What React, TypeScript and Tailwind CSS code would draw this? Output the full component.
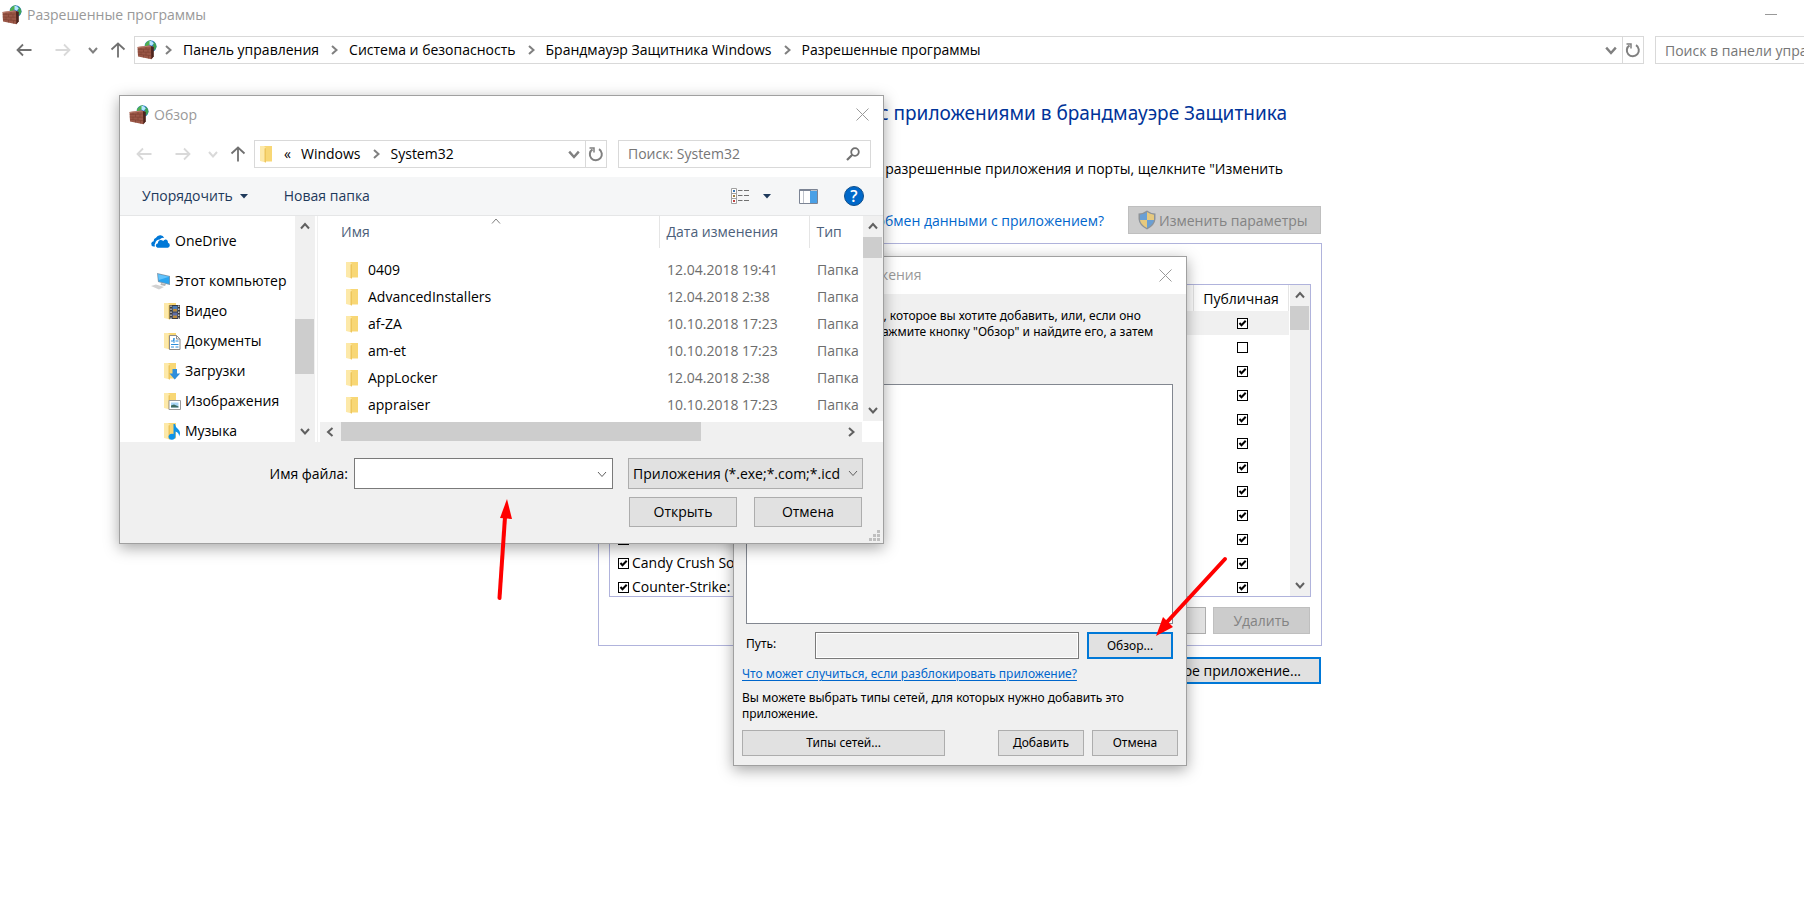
import type { ReactNode } from 'react'

const PUBLIC_ROWS = [
  { name: '', on: true },
  { name: '', on: false },
  { name: '', on: true },
  { name: '', on: true },
  { name: '', on: true },
  { name: '', on: true },
  { name: '', on: true },
  { name: '', on: true },
  { name: '', on: true },
  { name: 'Bubble Witch 3 Saga', on: true },
  { name: 'Candy Crush Soda Saga', on: true },
  { name: 'Counter-Strike:', on: true },
]

const FILES = [
  { name: '0409', date: '12.04.2018 19:41' },
  { name: 'AdvancedInstallers', date: '12.04.2018 2:38' },
  { name: 'af-ZA', date: '10.10.2018 17:23' },
  { name: 'am-et', date: '10.10.2018 17:23' },
  { name: 'AppLocker', date: '12.04.2018 2:38' },
  { name: 'appraiser', date: '10.10.2018 17:23' },
]

const CRUMBS = ['Панель управления', 'Система и безопасность', 'Брандмауэр Защитника Windows', 'Разрешенные программы']

function FirewallIcon() {
  return (
    <svg width="20" height="20" viewBox="0 0 20 20" className="shrink-0">
      <circle cx="13.5" cy="6.2" r="6" fill="#2f7fd0" />
      <path d="M8 4.500Q10 .5 14 .3L13.500 3 11.500 5.500 8 7Z" fill="#4fb04f" />
      <path d="M16.500 1.300Q19.300 3.500 19.500 7L17.500 10.500 16 6.500Z" fill="#3fa353" />
      <path d="M12.500 .8Q15.500 .6 16.800 3.500L14.500 5.800 12.500 4.500Z" fill="#b5e6ff" />
      <path d="M.5 7 12.500 5.500 16 6.500V17L14.500 19.300 1 16.500Z" fill="#9a5747" />
      <path d="M14 6.300 16.800 7V16.500L14.300 19.300Z" fill="#4d241c" />
      <path d="M.5 7 12.500 5.500 14 6.300 1 8Z" fill="#bd8172" />
      <path d="M.8 9.500 13.700 9M.8 12 13.700 12.300M1 14.300 14 15.700" stroke="#7c3f31" strokeWidth=".6" fill="none" />
      <path d="M4 7.700V9.400M9 7.200V9.200M6.500 9.300V12M11 9.200V12.200M4 12.200V14.700M9 12.300V15.200M6.500 15V17.500M11.500 15.500V18.500" stroke="#7c3f31" strokeWidth=".6" />
    </svg>
  )
}

function FolderIcon({ children }: { children?: ReactNode }) {
  return (
    <svg width="18" height="18" viewBox="0 0 18 18" className="shrink-0">
      <path d="M5 1H13V16.500H5Z" fill="#f8d775" />
      <path d="M1 1H5L7 3V17.500L1 16Z" fill="#fde9a9" />
      <path d="M5.500 3.500 7 3V17.500L5.500 17Z" fill="#eec65c" />
      {children}
    </svg>
  )
}

function Chevron({ dir, size = 10, color = '#606060', width = 2 }: { dir: 'up' | 'down' | 'left' | 'right'; size?: number; color?: string; width?: number }) {
  const d = {
    up: 'M1 7.500 5 3 9 7.500',
    down: 'M1 3 5 7.500 9 3',
    left: 'M7.500 1 3 5 7.500 9',
    right: 'M3 1 7.500 5 3 9',
  }[dir]
  return (
    <svg width={size} height={size} viewBox="0 0 10 10" fill="none" stroke={color} strokeWidth={width} className="shrink-0">
      <path d={d} />
    </svg>
  )
}

function CloseIcon() {
  return (
    <svg width="13" height="13" viewBox="0 0 13 13" stroke="#999" className="shrink-0">
      <path d="M.5 .5 12.500 12.500M12.500 .5 .5 12.500" />
    </svg>
  )
}

function RefreshIcon() {
  return (
    <svg width="16" height="16" viewBox="0 0 16 16" fill="none" stroke="#808080" strokeWidth="2">
      <path d="M11 3.200A6 6 0 1 1 4.500 3.300" />
      <path d="M1.500 2H6V6.500" strokeWidth="1.500" />
    </svg>
  )
}

function Arrow({ dir, color }: { dir: 'left' | 'right' | 'up'; color: string }) {
  const d = {
    left: 'M15.500 8H1.500M7 2.500 1.500 8 7 13.500',
    right: 'M.5 8H14.500M9 2.500 14.500 8 9 13.500',
    up: 'M8 15.500V1.500M1.500 7.500 8 1.500 14.500 7.500',
  }[dir]
  return (
    <svg width="16" height="16" viewBox="0 0 16 16" fill="none" stroke={color} strokeWidth="1.800">
      <path d={d} />
    </svg>
  )
}

function NavButtons({ active }: { active: boolean }) {
  return (
    <div className="flex shrink-0 items-center">
      <button aria-label="Назад" className="w-4"><Arrow dir="left" color={active ? '#707070' : '#d9d9d9'} /></button>
      <button aria-label="Вперед" className="ml-[23px] w-4"><Arrow dir="right" color="#d9d9d9" /></button>
      <button aria-label="Последние расположения" className="ml-[14px] w-4 px-[3px]"><Chevron dir="down" color={active ? '#808080' : '#d9d9d9'} /></button>
      <button aria-label="Вверх" className="ml-[9px] w-4"><Arrow dir="up" color="#707070" /></button>
    </div>
  )
}

function Check({ checked, label }: { checked: boolean; label: string }) {
  return (
    <span className="relative block size-[11px]">
      <input type="checkbox" defaultChecked={checked} aria-label={label} className="peer block size-[11px] appearance-none border border-black bg-white" />
      <svg viewBox="0 0 11 11" className="pointer-events-none absolute inset-0 hidden size-[11px] peer-checked:block" fill="none" stroke="#000" strokeWidth="2">
        <path d="M2.500 5 4.500 7.300 8.700 2.800" />
      </svg>
    </span>
  )
}

function VScroll({ before, thumb, className = '' }: { before: string; thumb: string; className?: string }) {
  return (
    <div className={`flex w-5 shrink-0 flex-col items-center bg-[#f0f0f0] ${className}`}>
      <button aria-label="Прокрутить вверх" className="flex h-[21px] w-full items-center justify-center pr-px pb-px"><Chevron dir="up" /></button>
      <div className={`w-full flex-1 ${before}`}>
        <div className={`w-[19px] bg-[#cdcdcd] ${thumb}`} />
      </div>
      <button aria-label="Прокрутить вниз" className="flex h-[21px] w-full items-center justify-center pr-px pb-[2px]"><Chevron dir="down" /></button>
    </div>
  )
}

function DialogButton({ children, className = '' }: { children: ReactNode; className?: string }) {
  return <button className={`border border-[#adadad] bg-[#e1e1e1] ${className}`}>{children}</button>
}

function AllowedPrograms() {
  return (
    <main className="ml-[598px] w-[724px]">
      <h1 className="pt-[29px] pr-[35px] text-right font-['Noto_Sans',sans-serif] text-[19px] leading-[26px] whitespace-nowrap text-[#003399]">с приложениями в брандмауэре Защитника</h1>
      <p className="mt-[33px] pr-[39px] text-right leading-5 whitespace-nowrap">разрешенные приложения и порты, щелкните "Изменить</p>
      <div className="mt-[27px] flex items-center justify-end pr-px">
        <a href="#risk" className="mr-6 pt-[2px] leading-5 text-[#0066cc]">обмен данными с приложением?</a>
        <button className="flex h-7 w-[193px] items-center gap-[2px] border border-[#bfbfbf] bg-[#cccccc] pl-2 text-[#838383]">
          <svg width="20" height="20" viewBox="0 0 20 20" className="shrink-0">
            <path d="M10 .5Q14 3.500 18.500 3.500V9Q18 15.500 10 19.500Q2 15.500 1.500 9V3.500Q6 3.500 10 .5Z" fill="#8d9399" />
            <path d="M10 2Q7 4.300 3 4.700V10H10Z" fill="#6a9fd4" />
            <path d="M10 2Q13 4.300 17 4.700V10H10Z" fill="#e6c97e" />
            <path d="M3 10H10V18Q3.500 14.500 3 10Z" fill="#e6c97e" />
            <path d="M17 10H10V18Q16.500 14.500 17 10Z" fill="#6a9fd4" />
          </svg>
          Изменить параметры
        </button>
      </div>

      <section className="mt-[9px] border border-[#b0b3dc] px-[10px] pt-10 pb-[11px]">
        <div className="flex h-[313px] overflow-hidden border border-[#b0b3dc]">
          <div className="flex-1 overflow-hidden">
            <table className="w-full table-fixed border-collapse">
              <thead>
                <tr className="h-[26px]">
                  <th className="border-r border-[#e5e5e5]" />
                  <th className="w-[95px] border-r border-[#e5e5e5] font-normal">Публичная</th>
                </tr>
              </thead>
              <tbody>
                {PUBLIC_ROWS.map((row, i) => (
                  <tr key={i} className="h-6 first:bg-[#f0f0f0]">
                    <td className="p-0 pl-2">
                      <div className="flex items-center gap-[3px] leading-5 whitespace-nowrap">
                        <Check checked label={`${row.name || 'Программа'}: разрешено`} />
                        {row.name}
                      </div>
                    </td>
                    <td className="p-0 pl-[43px]">
                      <Check checked={row.on} label={`${row.name || 'Программа'}: публичная`} />
                    </td>
                  </tr>
                ))}
              </tbody>
            </table>
          </div>
          <VScroll before="" thumb="h-6" className="ml-px" />
        </div>
        <div className="mt-[10px] flex justify-end gap-[7px] pr-px">
          <button aria-label="Сведения" className="h-[27px] w-[97px] border border-[#adadad] bg-[#e1e1e1]" />
          <button className="h-[27px] w-[97px] border border-[#bfbfbf] bg-[#cccccc] text-[#838383]">Удалить</button>
        </div>
      </section>

      <div className="mt-[11px] flex justify-end pr-px">
        <button className="h-[27px] w-[230px] border-2 border-[#0078d7] bg-[#e1e1e1] pr-[18px] text-right whitespace-nowrap">другое приложение...</button>
      </div>
    </main>
  )
}

function AddDialog() {
  return (
    <section role="dialog" aria-label="Добавление приложения" className="absolute top-[256px] left-[733px] w-[454px] border border-[#a0a0a0] bg-[#f0f0f0] font-['Noto_Sans',sans-serif] text-[12px] leading-4 shadow-[0_4px_14px_rgba(0,0,0,0.35)]">
      <header className="flex h-[37px] items-center justify-between bg-white pr-[14px] pb-px pl-[14px] font-['Open_Sans',sans-serif] text-[14px] text-[#999]">
        Добавление приложения
        <button aria-label="Закрыть"><CloseIcon /></button>
      </header>
      <p className="h-[90px] pt-[14px] pl-4 whitespace-nowrap">
        Выберите приложение, которое вы хотите добавить, или, если оно<br />
        отсутствует в списке, нажмите кнопку "Обзор" и найдите его, а затем<br />
        нажмите кнопку "ОК".
      </p>
      <div className="mr-[13px] ml-3 h-60 border border-[#828790] bg-white" />
      <div className="flex items-center pt-2 pr-[13px] pl-3">
        <label htmlFor="path" className="w-[69px] pb-1">Путь:</label>
        <input id="path" readOnly className="h-[27px] min-w-0 flex-1 border border-[#7a7a7a] bg-[#f0f0f0] shadow-[inset_0_0_0_1px_white]" />
        <button className="ml-2 h-[27px] w-[86px] border-2 border-[#0078d7] bg-[#e1e1e1]">Обзор...</button>
      </div>
      <div className="px-2 pt-[7px] pb-[9px]">
        <a href="#unblock" className="block text-[#0066cc] underline underline-offset-2">Что может случиться, если разблокировать приложение?</a>
        <p className="mt-2">Вы можете выбрать типы сетей, для которых нужно добавить это приложение.</p>
        <div className="mt-2 flex">
          <DialogButton className="h-[26px] w-[203px]">Типы сетей...</DialogButton>
          <DialogButton className="ml-auto h-[26px] w-[86px]">Добавить</DialogButton>
          <DialogButton className="ml-2 h-[26px] w-[86px]">Отмена</DialogButton>
        </div>
      </div>
    </section>
  )
}

function SideItem({ icon, label }: { icon: ReactNode; label: string }) {
  return (
    <li className="h-[30px]">
      <a href="#folder" className="flex h-full items-center gap-1 pl-[43px] whitespace-nowrap">
        {icon}
        {label}
      </a>
    </li>
  )
}

function BrowseDialog() {
  return (
    <section role="dialog" aria-label="Обзор" className="absolute top-[95px] left-[119px] w-[765px] border border-[#a0a0a0] bg-[#f0f0f0] leading-5 shadow-[0_4px_14px_rgba(0,0,0,0.35)]">
      <header className="flex h-[38px] items-center bg-white pr-[14px] pb-px pl-[9px] text-[#999]">
        <FirewallIcon />
        <span className="ml-[5px] flex-1">Обзор</span>
        <button aria-label="Закрыть"><CloseIcon /></button>
      </header>

      <div className="flex h-[43px] items-center bg-white pr-3 pb-[3px] pl-4">
        <NavButtons active={false} />
        <div className="ml-2 flex h-7 w-[353px] items-center border border-[#d9d9d9] pl-1">
          <FolderIcon />
          <span className="ml-[7px]">«</span>
          <span className="ml-[10px]">Windows</span>
          <span className="mx-[10px]"><Chevron dir="right" color="#808080" /></span>
          <span className="flex-1">System32</span>
          <button aria-label="Предыдущие расположения" className="px-[5px]"><Chevron dir="down" size={12} color="#808080" /></button>
          <button aria-label="Обновить" className="flex h-full w-[21px] items-center justify-center border-l border-[#d9d9d9]"><RefreshIcon /></button>
        </div>
        <label className="ml-[11px] flex h-7 flex-1 items-center border border-[#d9d9d9] pr-[10px] pl-[9px]">
          <input aria-label="Поиск" placeholder="Поиск: System32" className="min-w-0 flex-1 placeholder:text-[#767676]" />
          <svg width="14" height="14" viewBox="0 0 14 14" fill="none" stroke="#707070" strokeWidth="1.800">
            <circle cx="9" cy="5" r="3.800" />
            <path d="M6.300 7.700 1 13" strokeWidth="2.200" />
          </svg>
        </label>
      </div>

      <div className="flex h-[39px] items-center border-b border-[#e5e6e7] bg-[#f5f6f7] pr-[19px] pl-[22px] text-[#1e395b]">
        <button className="flex items-center gap-[7px]">
          Упорядочить
          <svg width="8" height="5" viewBox="0 0 8 5" fill="#1e395b"><path d="M0 0H8L4 4.500Z" /></svg>
        </button>
        <button className="ml-9">Новая папка</button>
        <button aria-label="Представление" className="ml-auto flex items-center gap-[13px]">
          <svg width="19" height="16" viewBox="0 0 19 16" fill="none">
            <path d="M.5 .5H5.500V15.500H.5ZM.5 5.500H5.500M.5 10.500H5.500" fill="#fff" stroke="#a0a0a0" />
            <path d="M2 2H4V4H2Z" fill="#3a78b5" /><path d="M2 7H4V9H2Z" fill="#a08040" /><path d="M2 12H4V14H2Z" fill="#c04040" />
            <path d="M7 2.500H11.500M13 2.500H18M7 7.500H11.500M13 7.500H18M7 12.500H11.500M13 12.500H18" stroke="#707070" />
          </svg>
          <svg width="8" height="5" viewBox="0 0 8 5" fill="#1e395b"><path d="M0 0H8L4 4.500Z" /></svg>
        </button>
        <button aria-label="Область просмотра" className="ml-7">
          <svg width="19" height="15" viewBox="0 0 19 15" fill="none">
            <path d="M.5 .5H18.500V14.500H.5Z" fill="#fff" stroke="#7c8494" />
            <path d="M1 1.500H18" stroke="#7c8494" />
            <path d="M4.500 2V14" stroke="#c0c4cc" />
            <path d="M11 2H18V14H11Z" fill="#4aa0e6" />
            <path d="M12.500 1.500H13.500M14.500 1.500H15.500M16.500 1.500H17.500" stroke="#fff" />
          </svg>
        </button>
        <button aria-label="Справка" className="ml-[26px] flex size-5 items-center justify-center rounded-full border border-[#0f4f8c] bg-[#0068c9] text-[16px] font-semibold text-white">?</button>
      </div>

      <div className="flex h-[226px] overflow-hidden bg-white">
        <ul className="h-full w-[175px] shrink-0 overflow-hidden pt-[10px]">
          <li className="mb-[10px] h-[30px]">
            <a href="#onedrive" className="flex h-full items-center gap-[5px] pl-[31px]">
              <svg width="19" height="13" viewBox="0 0 19 13" className="shrink-0" fill="#0078d7">
                <path d="M4 11.500H2.500Q0 11 .2 8.500 .6 6.500 2.600 6.300 2.500 3.500 5 2.800 6.500 0 9.500 .3 12.300 .6 13.200 3 10.500 2.300 8.800 4.500 5 4.500 4.300 8 3 9.500 4 11.500Z" />
                <path d="M6.500 12.700Q4.700 12.300 4.800 10.300 5 8.500 6.900 8.200 7 5.300 9.700 5 11.200 5 12.200 6 13.300 4 15.200 4.500 17.300 5.300 17 7.800 19 8.500 18.800 10.500 18.500 12.500 16.800 12.700Z" />
              </svg>
              OneDrive
            </a>
          </li>
          <li className="h-[30px]">
            <a href="#pc" className="flex h-full items-center gap-[5px] pl-[31px] whitespace-nowrap">
              <svg width="19" height="18" viewBox="0 0 19 18" className="shrink-0">
                <path d="M6 1 19 4V13L7 10Z" fill="#7f99ad" />
                <path d="M7 2.200 18.200 4.800V12L7.800 9.300Z" fill="#2ba5f0" />
                <path d="M7 2.200 18.200 4.800 7.800 8Z" fill="#63c3fb" />
                <path d="M10 11 15 12.200 14 14 9.500 13Z" fill="#b5b5b5" />
                <path d="M0 14 5 12.500 13 15 8 17.500Z" fill="#d2d2d2" />
              </svg>
              Этот компьютер
            </a>
          </li>
          <SideItem label="Видео" icon={
            <FolderIcon>
              <path d="M6.500 3H17V17H6.500Z" fill="#3b3b3b" />
              <path d="M9.500 4H14.500V9.500H9.500Z" fill="#4b7ab5" /><path d="M9.500 10.500H14.500V16H9.500Z" fill="#5e6ea8" />
              <path d="M10 7H14V9.500H10Z" fill="#b98a3c" /><path d="M10 13.500H14V16H10Z" fill="#b98a3c" />
              <path d="M8 3.500V17M15.800 3.500V17" stroke="#fff" strokeDasharray="1.500 1.500" />
            </FolderIcon>
          } />
          <SideItem label="Документы" icon={
            <FolderIcon>
              <path d="M6.500 3.500H13.500L17 7V17.500H6.500Z" fill="#fff" stroke="#8b8b8b" />
              <path d="M13.500 3.500V7H17" stroke="#8b8b8b" fill="none" />
              <path d="M8 9H10.500L11 6V11M12.500 9H15.500M8 12.500H15.500M8 15H11M12.500 15H15.500" stroke="#2f8fdc" fill="none" />
            </FolderIcon>
          } />
          <SideItem label="Загрузки" icon={
            <FolderIcon>
              <path d="M9.500 7H14V11.500H17.200L11.700 17.500 6.500 11.500H9.500Z" fill="#2f8fdc" />
            </FolderIcon>
          } />
          <SideItem label="Изображения" icon={
            <FolderIcon>
              <path d="M6 8.500H17.500V17.500H6Z" fill="#fff" stroke="#9a9a9a" />
              <path d="M8 10.500H15.500V15.500H8Z" fill="#a8d4f5" /><path d="M8 15.500V13.500L11 12.500 15.500 14.500V15.500Z" fill="#3d6a60" />
            </FolderIcon>
          } />
          <SideItem label="Музыка" icon={
            <FolderIcon>
              <path d="M10.500 2H12Q12.500 5.500 15 7 18.500 10 16 14.500 16.500 11 12.500 9.500V14.500A3.500 3 0 1 1 10.500 12Z" fill="#0e93e8" />
            </FolderIcon>
          } />
        </ul>
        <VScroll before="pt-[82px]" thumb="h-[55px]" />
        <div className="ml-[2px] w-px bg-[#f0f0f0]" />

        <div className="ml-[2px] flex min-w-0 flex-1 flex-col">
          <div className="flex h-[205px]">
            <div className="relative flex-1 overflow-hidden">
              <span className="absolute top-0 left-[171px]"><Chevron dir="up" color="#808080" width={1} /></span>
              <table className="w-full table-fixed border-collapse text-left">
                <thead>
                  <tr className="h-8 text-[#4c607a]">
                    <th className="border-r border-[#e5e5e5] p-0 pl-[21px] font-normal">Имя</th>
                    <th className="w-[150px] border-r border-[#e5e5e5] p-0 pl-[7px] font-normal whitespace-nowrap">Дата изменения</th>
                    <th className="w-[54px] p-0 pl-[7px] font-normal">Тип</th>
                  </tr>
                </thead>
                <tbody>
                  <tr className="h-2"><td /></tr>
                  {FILES.map(f => (
                    <tr key={f.name} className="h-[27px] text-[#6d6d6d]">
                      <td className="p-0 pl-[25px] text-black">
                        <div className="flex items-center gap-[5px]">
                          <FolderIcon />
                          {f.name}
                        </div>
                      </td>
                      <td className="p-0 pl-2 whitespace-nowrap">{f.date}</td>
                      <td className="p-0 pl-2">Папка</td>
                    </tr>
                  ))}
                </tbody>
              </table>
            </div>
            <VScroll before="" thumb="h-[21px]" />
          </div>
          <div className="mt-px mr-[21px] flex h-5 bg-[#f0f0f0]">
            <button aria-label="Прокрутить влево" className="flex w-[21px] items-center justify-center pr-[2px] pb-px"><Chevron dir="left" /></button>
            <div className="h-[19px] w-[360px] bg-[#cdcdcd]" />
            <button aria-label="Прокрутить вправо" className="ml-auto flex w-[21px] items-center justify-center pr-[2px] pb-px"><Chevron dir="right" /></button>
          </div>
        </div>
      </div>

      <footer className="relative flex flex-col gap-2 pt-4 pr-5 pb-4">
        <div className="flex items-center justify-end">
          <label htmlFor="filename">Имя файла:</label>
          <div className="ml-[6px] flex h-[31px] w-[259px] items-center border border-[#7a7a7a] bg-white pr-[5px]">
            <input id="filename" className="min-w-0 flex-1 px-1" />
            <Chevron dir="down" width={1} />
          </div>
          <div className="relative ml-[15px] w-[235px]">
            <select aria-label="Тип файлов" className="block h-[31px] w-full appearance-none border border-[#adadad] bg-[#e1e1e1] pr-4 pl-1">
              <option>Приложения (*.exe;*.com;*.icd</option>
            </select>
            <span className="pointer-events-none absolute top-[10px] right-[5px]"><Chevron dir="down" width={1} /></span>
          </div>
        </div>
        <div className="flex justify-end gap-[17px] pr-px">
          <DialogButton className="h-[30px] w-[108px]">Открыть</DialogButton>
          <DialogButton className="h-[30px] w-[108px]">Отмена</DialogButton>
        </div>
        <svg width="11" height="11" viewBox="0 0 11 11" fill="#bfbfbf" className="absolute right-[3px] bottom-[2px]">
          <path d="M8 0H11V3H8ZM4 4H7V7H4ZM8 4H11V7H8ZM0 8H3V11H0ZM4 8H7V11H4ZM8 8H11V11H8Z" />
        </svg>
      </footer>
    </section>
  )
}

export default function App() {
  return (
    <div className="relative min-h-screen overflow-hidden bg-white font-['Open_Sans',sans-serif] text-[14px] text-black">
      <header className="flex h-[30px] items-center pr-[27px] pb-px pl-[2px] text-[#999]">
        <FirewallIcon />
        <span className="ml-[5px] flex-1">Разрешенные программы</span>
        <button aria-label="Свернуть" className="h-3"><span className="block h-px w-3 bg-[#999]" /></button>
      </header>

      <nav className="flex h-[41px] items-center pb-[1px] pl-4">
        <NavButtons active />
        <div className="ml-2 flex h-7 min-w-0 flex-1 items-center border border-[#d9d9d9] pl-[2px] leading-5 whitespace-nowrap">
          <span className="w-4"><FirewallIcon /></span>
          {CRUMBS.map(c => (
            <span key={c} className="flex items-center">
              <span className="mx-[10px]"><Chevron dir="right" color="#808080" /></span>
              <a href="#crumb">{c}</a>
            </span>
          ))}
          <button aria-label="Предыдущие расположения" className="ml-auto px-[5px]"><Chevron dir="down" size={12} color="#808080" /></button>
          <button aria-label="Обновить" className="flex h-full w-[21px] items-center justify-center border-l border-[#d9d9d9]"><RefreshIcon /></button>
        </div>
        <div className="ml-[11px] h-7 w-[149px] overflow-hidden border border-r-0 border-[#d9d9d9] pl-[9px]">
          <input aria-label="Поиск" placeholder="Поиск в панели управления" className="h-full w-60 placeholder:text-[#767676]" />
        </div>
      </nav>

      <AllowedPrograms />
      <AddDialog />
      <BrowseDialog />

      {/* pointers to the file name box and the browse button */}
      <svg width="16" height="106" viewBox="0 0 16 106" className="pointer-events-none absolute top-[497px] left-[497px]">
        <path d="M2.500 101 8 20" stroke="#f00" strokeWidth="4" strokeLinecap="round" />
        <path d="M10 2 15 22 3 21Z" fill="#f00" />
      </svg>
      <svg width="74" height="82" viewBox="0 0 74 82" className="pointer-events-none absolute top-[556px] left-[1155px]">
        <path d="M70 3 12 66" stroke="#f00" strokeWidth="4" strokeLinecap="round" />
        <path d="M1 80 8 61 18 71Z" fill="#f00" />
      </svg>
    </div>
  )
}
